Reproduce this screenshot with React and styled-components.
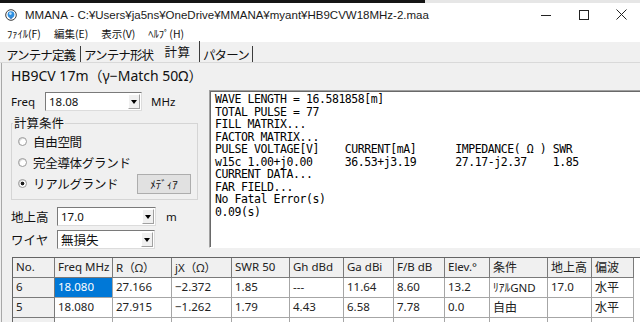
import React from 'react';
import styled, { createGlobalStyle } from 'styled-components';

const GlobalStyle = createGlobalStyle`
  html, body { margin: 0; padding: 0; background: #f0f0f0; overflow: hidden; }
  body { font-family: "Noto Sans", "Noto Sans CJK JP", sans-serif; color: #000; }
  * { box-sizing: border-box; }
`;

const Window = styled.div`
  width: 640px;
  height: 322px;
  overflow: hidden;
  display: flex;
  flex-direction: column;
  background: #f0f0f0;
`;

const TopStrip = styled.div`
  flex: none;
  height: 3px;
  background: linear-gradient(to right, #151515 0, #151515 425px, #e6e6e6 425px);
`;

const TitleBar = styled.div`
  flex: none;
  height: 23px;
  background: #fff;
  display: flex;
  align-items: center;
  padding-left: 5px;
`;

const TitleText = styled.div`
  flex: 1;
  margin-left: 8px;
  font-family: "Liberation Sans", "Noto Sans CJK JP", sans-serif;
  font-size: 11.5px;
  color: #1a1a1a;
  white-space: nowrap;
  overflow: hidden;
`;

const ControlButton = styled.div`
  flex: none;
  width: ${p => p.$w}px;
  height: 23px;
  display: flex;
  align-items: center;
  justify-content: center;
`;

const MenuBar = styled.div`
  flex: none;
  height: 16px;
  background: #fff;
  display: flex;
  align-items: center;
  gap: 13px;
  padding-left: 7px;
`;

const MenuItem = styled.span`
  font-family: "Noto Sans CJK JP", sans-serif;
  font-size: 10.5px;
  line-height: 14px;
  color: #111;
`;

const TabStrip = styled.div`
  flex: none;
  height: 21px;
  display: flex;
  align-items: flex-end;
  padding-left: 3px;
  border-bottom: 1px solid #d9d9d9;
  background: #f0f0f0;
`;

const Tab = styled.div`
  flex: none;
  width: ${p => p.$w}px;
  height: ${p => (p.$active ? 21 : 16)}px;
  padding-left: ${p => (p.$active ? 0 : 3)}px;
  display: flex;
  align-items: center;
  justify-content: ${p => (p.$active ? 'center' : 'flex-start')};
  border-right: ${p => (p.$sep ? '1px solid #3c3c3c' : '1px solid transparent')};
  font-family: "Noto Sans CJK JP", sans-serif;
  font-size: 12.5px;
  letter-spacing: ${p => (p.$active ? '0.5px' : '-0.9px')};
  line-height: 16px;
  color: #111;
  white-space: nowrap;
`;

const TabLabel = styled.span`
  display: block;
  margin-top: ${p => (p.$active ? 0 : 1)}px;
`;

const Content = styled.div`
  flex: 1;
  display: flex;
  flex-direction: column;
  border-left: 1px solid #a8a8a8;
  margin-left: 1px;
`;

const UpperRow = styled.div`
  flex: none;
  height: 187px;
  display: flex;
`;

const LeftPanel = styled.div`
  flex: none;
  width: 207px;
  display: flex;
  flex-direction: column;
  padding: 3px 0 0 9px;
`;

const Heading = styled.div`
  height: 20px;
  line-height: 20px;
  font-family: "Noto Sans", "Noto Sans CJK JP", sans-serif;
  font-size: 14px;
  color: #111;
  white-space: nowrap;
`;

const FieldRow = styled.div`
  display: flex;
  align-items: center;
  height: ${p => p.$h || 19}px;
  margin-top: ${p => p.$mt || 0}px;
`;

const FieldLabel = styled.span`
  flex: none;
  width: ${p => p.$w}px;
  font-family: ${p => (p.$jp ? '"Noto Sans CJK JP", sans-serif' : '"Noto Sans", sans-serif')};
  font-size: ${p => (p.$jp ? 12.5 : 11.5)}px;
  color: #111;
  white-space: nowrap;
`;

const Unit = styled.span`
  margin-left: ${p => p.$ml}px;
  font-family: "Noto Sans", sans-serif;
  font-size: 11.5px;
  color: #111;
`;

const ComboBox = styled.div`
  flex: none;
  width: ${p => p.$w}px;
  height: 19px;
  display: flex;
  align-items: stretch;
  background: #fff;
  border: 1px solid;
  border-color: #7a7a7a #dcdcdc #dcdcdc #7a7a7a;
  padding: 1px;
`;

const ComboValue = styled.span`
  flex: 1;
  padding-left: 2px;
  font-family: ${p => (p.$jp ? '"Noto Sans CJK JP", sans-serif' : '"Noto Sans", sans-serif')};
  font-size: ${p => (p.$jp ? 12.5 : 11.5)}px;
  line-height: 15px;
  color: #111;
  white-space: nowrap;
`;

const DropButton = styled.span`
  flex: none;
  width: 12px;
  background: #f0f0f0;
  border: 1px solid;
  border-color: #ffffff #a0a0a0 #a0a0a0 #ffffff;
  display: flex;
  align-items: center;
  justify-content: center;
  &::after {
    content: "";
    display: block;
    width: 0;
    height: 0;
    border-left: 3px solid transparent;
    border-right: 3px solid transparent;
    border-top: 4px solid #000;
  }
`;

const GroupBox = styled.fieldset`
  margin: 4px 11px 0 0;
  padding: 0 6px 5px 6px;
  border: 1px solid #d5d5d5;
  min-width: 0;
`;

const Legend = styled.legend`
  margin-left: -5px;
  padding: 0 1px;
  font-family: "Noto Sans CJK JP", sans-serif;
  font-size: 12.5px;
  line-height: 16px;
  color: #111;
`;

const RadioRow = styled.div`
  height: 21px;
  display: flex;
  align-items: center;
`;

const RadioMark = styled.span`
  flex: none;
  width: 9px;
  height: 9px;
  border-radius: 50%;
  border: 1px solid #9a9a9a;
  background: ${p => (p.$checked
    ? 'radial-gradient(circle, #1e1e1e 0, #1e1e1e 1.6px, #ffffff 2.2px)'
    : '#ffffff')};
  box-shadow: inset 1px 1px 0 #dadada;
`;

const RadioLabel = styled.span`
  margin-left: 6px;
  font-family: "Noto Sans CJK JP", sans-serif;
  font-size: 12.5px;
  letter-spacing: -0.3px;
  color: #111;
  white-space: nowrap;
`;

const PushButton = styled.button`
  margin-left: auto;
  width: 54px;
  height: 20px;
  padding: 0;
  background: #e1e1e1;
  border: 1px solid #adadad;
  font-family: "Noto Sans CJK JP", sans-serif;
  font-size: 11px;
  color: #111;
  display: flex;
  align-items: center;
  justify-content: center;
`;

const OutputBox = styled.div`
  flex: none;
  width: 440px;
  height: 158px;
  margin-top: 27px;
  background: #fff;
  border-top: 1px solid #a0a0a0;
  border-left: 1px solid #a0a0a0;
  border-bottom: 1px solid #ffffff;
  box-shadow: inset 1px 1px 0 #696969;
  padding: 2px 5px;
`;

const OutputText = styled.pre`
  margin: 0;
  font-family: "DejaVu Sans Mono", "Liberation Mono", monospace;
  font-size: 11.5px;
  letter-spacing: -0.43px;
  line-height: 12.55px;
  color: #000;
`;

const TableWrap = styled.div`
  flex: 1;
  margin: 7px 0 0 10px;
  background: #fff;
  border-top: 1px solid #646464;
  border-left: 1px solid #646464;
  overflow: hidden;
`;

const Grid = styled.div`
  display: grid;
  grid-template-columns: 42px 58px 59px 60px 58px 54px 50px 51px 45px 58px 44px 42px;
  grid-auto-rows: 20px;
  justify-content: start;
`;

const Cell = styled.div`
  display: flex;
  align-items: center;
  padding: 0 0 2px 3px;
  border-right: 1px solid ${p => (p.$fixed ? '#7a7a7a' : '#a6a6a6')};
  border-bottom: 1px solid ${p => (p.$fixed ? '#7a7a7a' : '#a6a6a6')};
  background: ${p => (p.$selected ? '#0078d7' : p.$fixed ? '#f0f0f0' : '#ffffff')};
  color: ${p => (p.$selected ? '#ffffff' : '#222')};
  font-family: ${p => (p.$jp ? '"Noto Sans CJK JP", sans-serif' : '"Noto Sans", "Noto Sans CJK JP", sans-serif')};
  font-size: ${p => (p.$jp ? 12 : 11.5)}px;
  white-space: nowrap;
  overflow: hidden;
`;

const AppIcon = () => (
  <svg width="12" height="12" viewBox="0 0 12 12">
    <circle cx="6" cy="6" r="5.3" fill="#fff" stroke="#3a3a3a" strokeWidth="1" />
    <circle cx="6" cy="5.6" r="3.4" fill="#2f8fe0" />
    <circle cx="5.4" cy="4.6" r="1.3" fill="#bfe4ff" />
    <path d="M4.2 8.6 L7.8 8.6 L6 10.2 Z" fill="#2a6db8" />
  </svg>
);

const MinIcon = () => (
  <svg width="10" height="10" viewBox="0 0 10 10">
    <line x1="0" y1="5.5" x2="10" y2="5.5" stroke="#222" strokeWidth="1" />
  </svg>
);
const MaxIcon = () => (
  <svg width="10" height="10" viewBox="0 0 10 10">
    <rect x="0.5" y="0.5" width="9" height="9" fill="none" stroke="#222" strokeWidth="1" />
  </svg>
);
const CloseIcon = () => (
  <svg width="11" height="11" viewBox="0 0 11 11">
    <path d="M0.5 0.5 L10.5 10.5 M10.5 0.5 L0.5 10.5" stroke="#222" strokeWidth="1" />
  </svg>
);

const outputLines = [
  'WAVE LENGTH = 16.581858[m]',
  'TOTAL PULSE = 77',
  'FILL MATRIX...',
  'FACTOR MATRIX...',
  'PULSE VOLTAGE[V]    CURRENT[mA]      IMPEDANCE( Ω ) SWR',
  'w15c 1.00+j0.00     36.53+j3.19      27.17-j2.37    1.85',
  'CURRENT DATA...',
  'FAR FIELD...',
  'No Fatal Error(s)',
  '0.09(s)',
];

const headers = ['No.', 'Freq MHz', 'R（Ω）', 'jX（Ω）', 'SWR 50', 'Gh dBd', 'Ga dBi', 'F/B dB', 'Elev.°', '条件', '地上高', '偏波'];
const jpCols = new Set([9, 10, 11]);

const rows = [
  ['6', '18.080', '27.166', '−2.372', '1.85', '---', '11.64', '8.60', '13.2', 'ﾘｱﾙGND', '17.0', '水平'],
  ['5', '18.080', '27.915', '−1.262', '1.79', '4.43', '6.58', '7.78', '0.0', '自由', '', '水平'],
  ['', '', '', '', '', '', '', '', '', '', '', ''],
];

const tabs = [
  { label: 'アンテナ定義', w: 78, sep: true },
  { label: 'アンテナ形状', w: 75, sep: false },
  { label: '計算', w: 44, sep: true, active: true },
  { label: 'パターン', w: 53, sep: true },
];

export default function App() {
  return (
    <>
      <GlobalStyle />
      <Window>
        <TopStrip />
        <TitleBar>
          <AppIcon />
          <TitleText>MMANA - C:¥Users¥ja5ns¥OneDrive¥MMANA¥myant¥HB9CVW18MHz-2.maa</TitleText>
          <ControlButton $w={40}><MinIcon /></ControlButton>
          <ControlButton $w={36}><MaxIcon /></ControlButton>
          <ControlButton $w={38}><CloseIcon /></ControlButton>
        </TitleBar>
        <MenuBar>
          <MenuItem>ﾌｧｲﾙ(F)</MenuItem>
          <MenuItem>編集(E)</MenuItem>
          <MenuItem>表示(V)</MenuItem>
          <MenuItem>ﾍﾙﾌﾟ(H)</MenuItem>
        </MenuBar>
        <TabStrip>
          {tabs.map(t => (
            <Tab key={t.label} $w={t.w} $sep={t.sep} $active={t.active}>
              <TabLabel $active={t.active}>{t.label}</TabLabel>
            </Tab>
          ))}
        </TabStrip>
        <Content>
          <UpperRow>
            <LeftPanel>
              <Heading>HB9CV 17m（γ−Match 50Ω）</Heading>
              <FieldRow $mt={6}>
                <FieldLabel $w={34}>Freq</FieldLabel>
                <ComboBox $w={97}>
                  <ComboValue>18.08</ComboValue>
                  <DropButton />
                </ComboBox>
                <Unit $ml={9}>MHz</Unit>
              </FieldRow>
              <GroupBox>
                <Legend>計算条件</Legend>
                <RadioRow>
                  <RadioMark />
                  <RadioLabel>自由空間</RadioLabel>
                </RadioRow>
                <RadioRow>
                  <RadioMark />
                  <RadioLabel>完全導体グランド</RadioLabel>
                </RadioRow>
                <RadioRow>
                  <RadioMark $checked />
                  <RadioLabel>リアルグランド</RadioLabel>
                  <PushButton>ﾒﾃﾞｨｱ</PushButton>
                </RadioRow>
              </GroupBox>
              <FieldRow $mt={7}>
                <FieldLabel $w={46} $jp>地上高</FieldLabel>
                <ComboBox $w={99}>
                  <ComboValue>17.0</ComboValue>
                  <DropButton />
                </ComboBox>
                <Unit $ml={10}>m</Unit>
              </FieldRow>
              <FieldRow $mt={4}>
                <FieldLabel $w={46} $jp>ワイヤ</FieldLabel>
                <ComboBox $w={98}>
                  <ComboValue $jp>無損失</ComboValue>
                  <DropButton />
                </ComboBox>
              </FieldRow>
            </LeftPanel>
            <OutputBox>
              <OutputText>{outputLines.join('\n')}</OutputText>
            </OutputBox>
          </UpperRow>
          <TableWrap>
            <Grid>
              {headers.map((h, i) => (
                <Cell key={'h' + i} $fixed $jp={jpCols.has(i)}>{h}</Cell>
              ))}
              {rows.map((r, ri) =>
                r.map((v, ci) => (
                  <Cell
                    key={ri + '-' + ci}
                    $fixed={ci === 0}
                    $selected={ri === 0 && ci === 1}
                    $jp={ci === 9 || ci === 11 ? /[^\x00-\x7f]/.test(v) && !/GND/.test(v) : false}
                  >
                    {v}
                  </Cell>
                ))
              )}
            </Grid>
          </TableWrap>
        </Content>
      </Window>
    </>
  );
}
